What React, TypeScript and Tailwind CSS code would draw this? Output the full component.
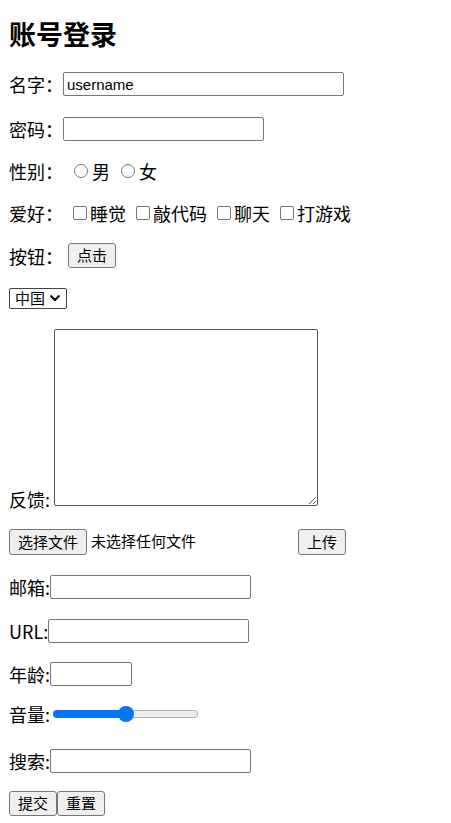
const labelFont = "font-['Noto_Sans_CJK_SC',sans-serif]";
const ctrlFont = "font-['Liberation_Sans','Noto_Sans_CJK_SC',sans-serif]";

function TextBox({ width, value }: { width: string; value?: string }) {
  return (
    <input
      type="text"
      defaultValue={value}
      className={`${width} h-[24px] rounded-[2px] border border-[#767676] bg-white px-[3px] text-[15px] text-black outline-none ${ctrlFont}`}
    />
  );
}

function Btn({ children, h = "h-[25px]" }: { children: React.ReactNode; h?: string }) {
  return (
    <button
      className={`${h} rounded-[3px] border border-[#767676] bg-[#efefef] px-[8px] text-[15px] leading-none text-black ${ctrlFont}`}
    >
      {children}
    </button>
  );
}

function Radio() {
  return <span className="ml-[11px] inline-block h-[14px] w-[14px] rounded-full border border-[#767676] bg-white" />;
}

function Check() {
  return <span className="ml-[10px] inline-block h-[14px] w-[14px] rounded-[2px] border border-[#767676] bg-white" />;
}

export default function App() {
  return (
    <div className={`flex min-h-[823px] flex-col bg-white pl-[9px] pt-[15px] text-[18px] leading-[18px] text-black ${labelFont}`}>
      <div className="flex h-[36px] items-center">
        <h1 className="text-[27px] font-bold leading-[27px]">账号登录</h1>
      </div>

      <div className="mt-[21px] flex h-[24px] items-center">
        <span>名字：</span>
        <TextBox width="w-[281px]" value="username" />
      </div>

      <div className="mt-[21px] flex h-[24px] items-center">
        <span>密码：</span>
        <TextBox width="w-[201px]" />
      </div>

      <div className="mt-[18px] flex h-[24px] items-center">
        <span>性别：</span>
        <Radio />
        <span className="ml-[4px]">男</span>
        <Radio />
        <span className="ml-[4px]">女</span>
      </div>

      <div className="mt-[18px] flex h-[24px] items-center">
        <span>爱好：</span>
        {["睡觉", "敲代码", "聊天", "打游戏"].map((h) => (
          <span key={h} className="flex items-center">
            <Check />
            <span className="ml-[3px]">{h}</span>
          </span>
        ))}
      </div>

      <div className="mt-[18px] flex h-[25px] items-center">
        <span>按钮：</span>
        <span className="ml-[5px]">
          <Btn>点击</Btn>
        </span>
      </div>

      <div className="mt-[20px] flex h-[21px] items-center">
        <div className={`flex h-[21px] w-[58px] items-center rounded-[2px] border border-[#444] bg-white pl-[5px] text-[15px] leading-none ${ctrlFont}`}>
          <span>中国</span>
          <svg className="ml-[5px]" width="10" height="7" viewBox="0 0 10 7">
            <path d="M1.2 1.2 L5 5 L8.8 1.2" fill="none" stroke="#000" strokeWidth="2.2" strokeLinecap="round" strokeLinejoin="round" />
          </svg>
        </div>
      </div>

      <div className="mt-[20px] flex h-[177px] items-end">
        <span className="translate-y-[2px]">反馈:</span>
        <textarea className="ml-[4px] h-[177px] w-[264px] rounded-[2px] border border-[#555] bg-white outline-none" />
      </div>

      <div className="mt-[23px] flex h-[26px] items-center">
        <span className="flex w-[285px] items-center">
          <Btn h="h-[26px]">选择文件</Btn>
          <span className={`ml-[4px] text-[15px] ${ctrlFont}`}>未选择任何文件</span>
        </span>
        <span className="ml-[4px]">
          <Btn h="h-[26px]">上传</Btn>
        </span>
      </div>

      <div className="mt-[20px] flex h-[24px] items-center">
        <span>邮箱:</span>
        <TextBox width="w-[201px]" />
      </div>

      <div className="mt-[20px] flex h-[24px] items-center">
        <span>URL:</span>
        <TextBox width="w-[201px]" />
      </div>

      <div className="mt-[19px] flex h-[24px] items-center">
        <span>年龄:</span>
        <TextBox width="w-[82px]" />
      </div>

      <div className="mt-[16px] flex h-[24px] items-center">
        <span>音量:</span>
        <div className="ml-[3px] flex w-[145px] items-center">
          <span className="h-[8px] w-[66px] rounded-l-full bg-[#0075ff]" />
          <span className="relative -ml-[1px] h-[16px] w-[16px] rounded-full bg-[#0075ff]" />
          <span className="-ml-[2px] h-[8px] w-[66px] rounded-r-full border border-l-0 border-[#b5b5b5] bg-[#efefef]" />
        </div>
      </div>

      <div className="mt-[23px] flex h-[24px] items-center">
        <span>搜索:</span>
        <TextBox width="w-[201px]" />
      </div>

      <div className="mt-[18px] flex h-[25px] items-center">
        <Btn>提交</Btn>
        <Btn>重置</Btn>
      </div>
    </div>
  );
}
